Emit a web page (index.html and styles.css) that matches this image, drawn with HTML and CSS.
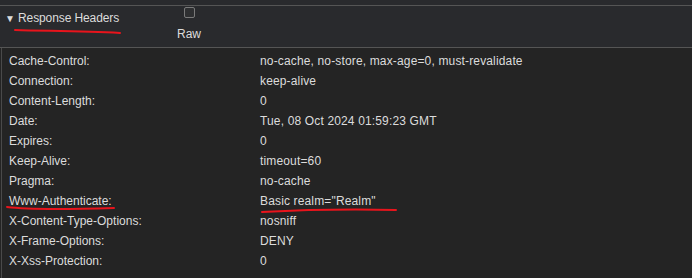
FILE: index.html
```html
<!DOCTYPE html>
<html lang="en">
<head>
  <meta charset="UTF-8" />
  <title>Response Headers</title>
  <link rel="stylesheet" href="styles.css">
</head>
<body>
  <div class="panel">
    <div class="panel-head">
      <div class="toggle"><span class="caret">&#9660;</span>Response Headers</div>
      <label class="raw">
        <input type="checkbox" class="raw-box" />
        <span>Raw</span>
      </label>
    </div>

    <div class="headers">
      <div class="row"><span class="key">Cache-Control:</span><span class="val">no-cache, no-store, max-age=0, must-revalidate</span></div>
      <div class="row"><span class="key">Connection:</span><span class="val">keep-alive</span></div>
      <div class="row"><span class="key">Content-Length:</span><span class="val">0</span></div>
      <div class="row"><span class="key">Date:</span><span class="val">Tue, 08 Oct 2024 01:59:23 GMT</span></div>
      <div class="row"><span class="key">Expires:</span><span class="val">0</span></div>
      <div class="row"><span class="key">Keep-Alive:</span><span class="val">timeout=60</span></div>
      <div class="row"><span class="key">Pragma:</span><span class="val">no-cache</span></div>
      <div class="row"><span class="key">Www-Authenticate:</span><span class="val">Basic realm="Realm"</span></div>
      <div class="row"><span class="key">X-Content-Type-Options:</span><span class="val">nosniff</span></div>
      <div class="row"><span class="key">X-Frame-Options:</span><span class="val">DENY</span></div>
      <div class="row"><span class="key">X-Xss-Protection:</span><span class="val">0</span></div>
    </div>

    <!-- red pen marks drawn over the screenshot -->
    <svg class="marks" width="692" height="278" viewBox="0 0 692 278">
      <path d="M15 30 C 45 31, 80 31, 120 33" />
      <path d="M7 207 C 30 210, 80 209, 114 208" />
      <path d="M262 212 C 300 210, 350 209, 396 210" />
    </svg>
  </div>
</body>
</html>
```

FILE: styles.css
```css
body {
  margin: 0;
  background-color: #242424;
  font-family: 'Liberation Sans', Arial, sans-serif;
  font-size: 12px;
  color: #dcdcdc;
}

.panel {
  position: relative;
  width: 692px;
  height: 278px;
  overflow: hidden;
}

.panel-head {
  display: flex;
  align-items: flex-start;
  height: 41px;
  background-color: #292a2d;
  border-top: 1px solid #555;
  border-bottom: 1px solid #555;
  box-shadow: 0 -5px 0 #292a2d;
  margin-top: 5px;
}

.toggle {
  padding: 5px 0 0 5px;
  line-height: 15px;
  width: 172px;
  letter-spacing: -0.1px;
}

.caret {
  display: inline-block;
  font-size: 10px;
  width: 13px;
  letter-spacing: 0;
}

.raw {
  display: flex;
  flex-direction: column;
  align-items: center;
  width: 24px;
  line-height: 15px;
}

.raw-box {
  appearance: none;
  width: 11px;
  height: 11px;
  margin: 1px 0 9px;
  border: 1px solid #7a7a7a;
  border-radius: 2px;
  background-color: #2e2f31;
}

.headers {
  border-left: 1px solid #4a4a4a;
  margin-left: 1px;
  padding: 3px 0 0 7px;
  min-height: 230px;
}

.row {
  display: grid;
  grid-template-columns: 251px 1fr;
  height: 20px;
  line-height: 20px;
}

.val {
  letter-spacing: 0.15px;
}

.marks {
  position: absolute;
  left: 0;
  top: 0;
  pointer-events: none;
}

.marks path {
  fill: none;
  stroke: #e8141c;
  stroke-width: 2;
  stroke-linecap: round;
}
```
